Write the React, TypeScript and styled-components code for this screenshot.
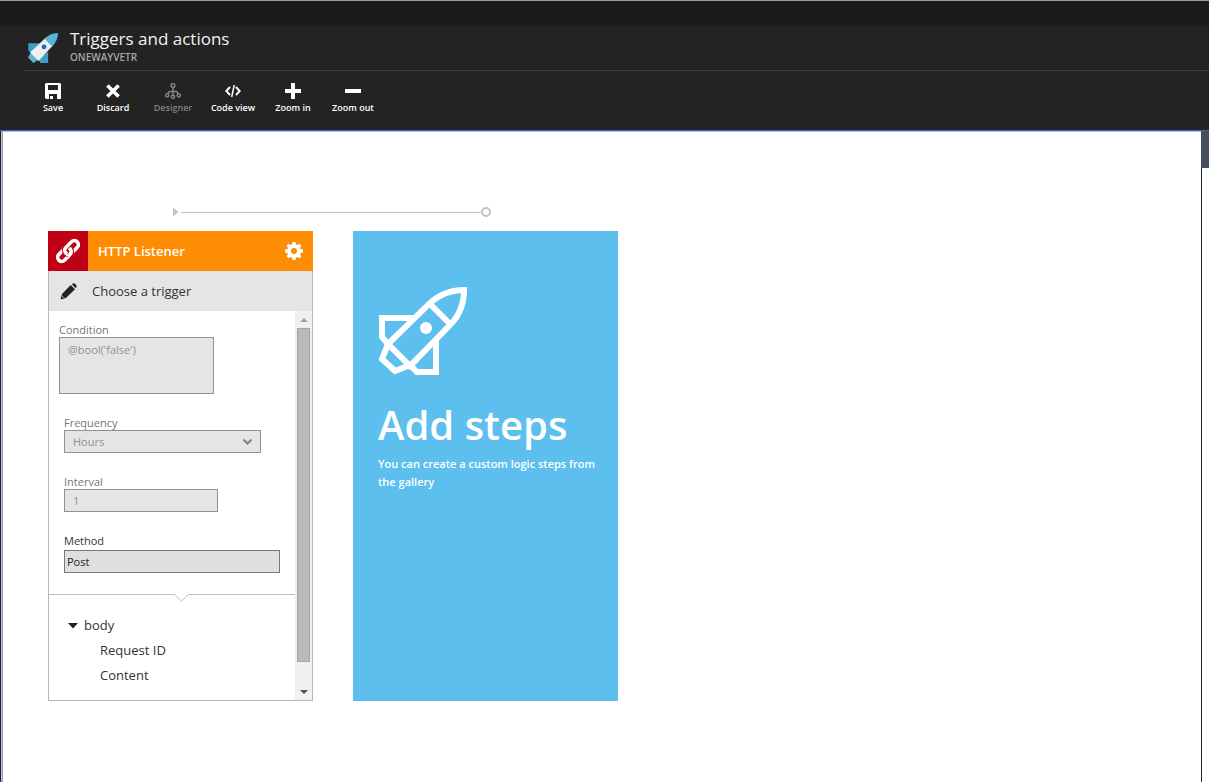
import React from 'react';
import styled, { createGlobalStyle } from 'styled-components';

const GlobalStyle = createGlobalStyle`
  * { box-sizing: border-box; }
  body { margin: 0; background: #fff; font-family: "Open Sans", "Noto Sans", sans-serif; }
  h1, h2, p, ul { margin: 0; padding: 0; }
  button, input, textarea, select { font-family: inherit; border-radius: 0; margin: 0; }
`;

const Page = styled.div`
  display: flex;
  flex-direction: column;
  min-height: 100vh;
`;

const TopStrip = styled.div`
  height: 26px;
  background: #1b1b1b;
  border-top: 1px solid #9a9d9c;
`;

const Header = styled.header`
  background: #232323;
  border-bottom: 1px solid #3a62b5;
  padding-left: 23px;
`;

const TitleBar = styled.div`
  display: flex;
  align-items: center;
  gap: 12px;
  height: 45px;
  padding-left: 5px;
  border-bottom: 1px solid #3e3e3e;
`;

const TitleText = styled.div`
  padding-bottom: 4px;
`;

const Title = styled.h1`
  color: #f2f2f2;
  font-size: 17px;
  line-height: 22px;
  font-weight: 400;
`;

const Subtitle = styled.p`
  color: #a6a6a6;
  font-size: 10px;
  line-height: 14px;
  font-weight: 600;
`;

const Toolbar = styled.nav`
  display: flex;
  height: 59px;
  padding-top: 12px;
`;

const ToolButton = styled.button`
  display: flex;
  flex-direction: column;
  align-items: center;
  gap: 3px;
  width: 60px;
  padding: 0;
  border: 0;
  background: none;
  color: #fff;
  font-size: 9px;
  line-height: 12px;
  font-weight: 600;
  white-space: nowrap;
  &:disabled { color: #828282; }
`;

const Workspace = styled.div`
  display: flex;
  flex: 1;
`;

const LeftEdge = styled.div`
  width: 3px;
  background: #a9c0f3;
  border-left: 1px solid #232323;
  border-right: 1px solid #a8a29c;
`;

const Canvas = styled.main`
  flex: 1;
  padding: 75px 45px;
  border-top: 1px solid #a9c0f3;
`;

const RightEdge = styled.div`
  width: 8px;
  border-left: 1px solid #232323;
`;

const EdgeThumb = styled.div`
  height: 37px;
  margin-left: -1px;
  background: #474e5d;
`;

const Connector = styled.div`
  display: flex;
  align-items: center;
  width: 318px;
  height: 10px;
  margin: 0 0 14px 125px;
`;

const ConnectorLine = styled.div`
  flex: 1;
  height: 1px;
  margin-left: 2px;
  background: #bfc4cc;
`;

const ConnectorEnd = styled.div`
  width: 10px;
  height: 10px;
  border: 2px solid #bfc4cc;
  border-radius: 50%;
`;

const Cards = styled.div`
  display: flex;
  gap: 40px;
`;

const Card = styled.section`
  display: flex;
  flex-direction: column;
  width: 265px;
  height: 470px;
`;

const CardHeader = styled.header`
  display: flex;
  align-items: center;
  height: 40px;
  background: #ff8c05;
`;

const ServiceIcon = styled.div`
  display: flex;
  align-items: center;
  justify-content: center;
  width: 40px;
  height: 40px;
  background: #c00014;
`;

const CardTitle = styled.h2`
  flex: 1;
  padding-left: 10px;
  color: #fff;
  font-size: 13px;
  line-height: 20px;
  font-weight: 600;
`;

const IconButton = styled.button`
  display: flex;
  padding: 0;
  margin-right: 10px;
  border: 0;
  background: none;
`;

const CardFrame = styled.div`
  display: flex;
  flex-direction: column;
  flex: 1;
  border: 1px solid #b7b7b7;
  border-top: 0;
`;

const TriggerButton = styled.button`
  display: flex;
  align-items: center;
  gap: 15px;
  height: 40px;
  padding: 0 0 0 11px;
  border: 0;
  background: #e5e5e5;
  color: #333;
  font-size: 13px;
  line-height: 20px;
`;

const CardBody = styled.div`
  display: flex;
  flex: 1;
`;

const CardContent = styled.div`
  flex: 1;
  padding-top: 12px;
`;

const Field = styled.div<{ $indent?: number }>`
  display: flex;
  flex-direction: column;
  align-items: flex-start;
  margin: 0 0 22px ${(p) => p.$indent ?? 15}px;
`;

const Label = styled.label<{ $active?: boolean }>`
  color: ${(p) => (p.$active ? '#333' : '#767676')};
  font-size: 11px;
  line-height: 14px;
  padding-bottom: ${(p) => (p.$active ? 2 : 0)}px;
`;

const ConditionBox = styled.textarea`
  display: block;
  width: 155px;
  height: 57px;
  padding: 4px 8px;
  border: 1px solid #929292;
  background: #e5e5e5;
  color: #929292;
  font-size: 11px;
  line-height: 16px;
  resize: none;
`;

const TextBox = styled.input<{ $width: number }>`
  width: ${(p) => p.$width}px;
  height: 23px;
  padding: 0 8px;
  border: 1px solid #929292;
  background: #e5e5e5;
  color: #929292;
  font-size: 11px;
  &:enabled { padding: 0 2px; background: #dfdfdf; border-color: #777; color: #222; }
`;

const SelectWrap = styled.div`
  position: relative;
  width: 197px;
  height: 23px;
`;

const Select = styled.select`
  display: block;
  appearance: none;
  width: 100%;
  height: 23px;
  padding: 0 8px;
  border: 1px solid #929292;
  background: #e5e5e5;
  color: #929292;
  font-size: 11px;
  opacity: 1;
`;

const SelectArrow = styled.svg`
  position: absolute;
  right: 8px;
  top: 8px;
  pointer-events: none;
`;

const Divider = styled.svg`
  display: block;
  width: 100%;
  height: 8px;
  margin-top: -1px;
`;

const Tree = styled.ul`
  list-style: none;
  padding: 11px 0 0 19px;
  color: #333;
  font-size: 13px;
  line-height: 25px;
  ul { padding-left: 32px; list-style: none; }
`;

const TreeToggle = styled.button`
  display: flex;
  align-items: center;
  gap: 6px;
  padding: 0;
  border: 0;
  background: none;
  color: inherit;
  font-size: 13px;
  line-height: 25px;
`;

const Scrollbar = styled.div`
  display: flex;
  flex-direction: column;
  align-items: center;
  width: 17px;
  background: #f0f0f0;
`;

const ScrollArrow = styled.div`
  display: flex;
  align-items: center;
  justify-content: center;
  height: 17px;
`;

const ScrollTrack = styled.div`
  flex: 1;
  padding-bottom: 21px;
`;

const ScrollThumb = styled.div`
  width: 13px;
  height: 100%;
  background: #bababa;
  border: 1px solid #a6a6a6;
`;

const AddCard = styled(Card)`
  padding: 56px 20px 0 25px;
  background: #5cbfed;
  color: #fff;
`;

const AddTitle = styled.h2`
  margin-top: 20px;
  font-size: 40px;
  line-height: 60px;
  font-weight: 600;
`;

const AddText = styled.p`
  font-size: 11px;
  line-height: 18px;
  font-weight: 600;
`;

const ColorRocket = () => (
  <svg width="30" height="30" viewBox="0 0 88 88" aria-hidden="true">
    <path d="M1 30H36L9 58L1 51Z" fill="#3f9fcb" />
    <path d="M59 54V88H36L31 78Z" fill="#3f9fcb" />
    <path d="M9 56L0 72L16 88L31 78Z" fill="#59b4d9" />
    <path d="M51 15L6 57L31 82L73 37Z" fill="#efefef" />
    <path d="M88 0Q63 1 48 17L71 40Q88 22 88 0Z" fill="#59b4d9" />
    <circle cx="47" cy="41" r="7" fill="#1072c6" />
  </svg>
);

const OutlineRocket = () => (
  <svg width="89" height="88" viewBox="-1 0 89 88" fill="none" stroke="#fff" strokeWidth="6" aria-hidden="true">
    <path d="M85 3Q64 3 49 18L9 57L31 79L71 38Q85 24 85 3Z" />
    <path d="M51 17L72 38" />
    <path d="M35 31H3V50L9 57L3 72L16 84L31 78L38 85H57V54" />
    <circle cx="47" cy="41" r="6" fill="#fff" stroke="none" />
  </svg>
);

const LinkIcon = () => (
  <svg width="26" height="26" viewBox="-13 -13 26 26" fill="none" aria-hidden="true">
    <g transform="rotate(-45)">
      <rect x="-13" y="-4" width="16" height="8" rx="4" stroke="#fff" strokeWidth="3.6" />
      <rect x="-3" y="-4" width="16" height="8" rx="4" stroke="#c00014" strokeWidth="5.4" />
      <rect x="-3" y="-4" width="16" height="8" rx="4" stroke="#fff" strokeWidth="3.6" />
      <path d="M-2.5 4H-0.5Q3 3.5 3 0" stroke="#c00014" strokeWidth="5.4" />
      <path d="M-4 4H-1.5Q3 3.5 3 -0.5" stroke="#fff" strokeWidth="3.6" />
    </g>
  </svg>
);

const SaveIcon = () => (
  <svg width="16" height="16" viewBox="0 0 16 16" aria-hidden="true">
    <path fill="currentColor" fillRule="evenodd" d="M1 0H15L16 1V16H12V11H4V16H1L0 15V1ZM3 2V7H13V2ZM5 13H8V16H5Z" />
  </svg>
);

const DiscardIcon = () => (
  <svg width="16" height="16" viewBox="0 0 16 16" stroke="currentColor" strokeWidth="3.6" aria-hidden="true">
    <path d="M2.4 2.4L13.6 13.6M13.6 2.4L2.4 13.6" />
  </svg>
);

const DesignerIcon = () => (
  <svg width="16" height="16" viewBox="0 0 16 16" fill="none" stroke="currentColor" strokeWidth="1.5" aria-hidden="true">
    <circle cx="8" cy="2.5" r="1.9" />
    <circle cx="2.3" cy="12.3" r="1.6" />
    <circle cx="13.7" cy="12.3" r="1.6" />
    <circle cx="8" cy="13.8" r="1.6" />
    <path d="M8 4.4V12M3 10.8Q3.3 8.5 5.5 8.5H10.5Q12.7 8.5 13 10.8" />
  </svg>
);

const CodeIcon = () => (
  <svg width="16" height="16" viewBox="0 0 16 16" fill="none" stroke="currentColor" strokeWidth="1.9" aria-hidden="true">
    <path d="M5 4L1.3 8L5 12M11 4L14.7 8L11 12" />
    <path d="M9.3 2L6.7 14" strokeWidth="1.5" />
  </svg>
);

const PlusIcon = () => (
  <svg width="16" height="16" viewBox="0 0 16 16" fill="currentColor" aria-hidden="true">
    <path d="M6 0H10V6H16V10H10V16H6V10H0V6H6Z" />
  </svg>
);

const MinusIcon = () => (
  <svg width="16" height="16" viewBox="0 0 16 16" fill="currentColor" aria-hidden="true">
    <path d="M0 6H16V10H0Z" />
  </svg>
);

const GearIcon = () => (
  <svg width="18" height="18" viewBox="-9 -9 18 18" aria-hidden="true">
    <g fill="#fff">
      {[0, 45, 90, 135].map((a) => (
        <path key={a} d="M-2.2 -6L-1.4 -9H1.4L2.2 -6V6L1.4 9H-1.4L-2.2 6Z" transform={`rotate(${a})`} />
      ))}
      <circle r="6.8" />
    </g>
    <circle r="3" fill="#ff8c05" />
  </svg>
);

const PencilIcon = () => (
  <svg width="17" height="17" viewBox="0 0 17 17" fill="#222" aria-hidden="true">
    <path d="M10.7 2L15 6.3L5.9 14.9L0.5 16.5L2 10.9Z" />
    <path d="M11.8 1.3L13.2 0.4Q14 0 14.8 0.6L16.5 2.4Q17 3.2 16.4 4L15.7 5.3Z" />
    <path d="M1.6 12.4L4.6 15.4" stroke="#e5e5e5" strokeWidth="0.7" />
  </svg>
);

const tools = [
  { label: 'Save', Icon: SaveIcon },
  { label: 'Discard', Icon: DiscardIcon },
  { label: 'Designer', Icon: DesignerIcon, disabled: true },
  { label: 'Code view', Icon: CodeIcon },
  { label: 'Zoom in', Icon: PlusIcon },
  { label: 'Zoom out', Icon: MinusIcon },
];

export default function App() {
  return (
    <Page>
      <GlobalStyle />
      <TopStrip />
      <Header>
        <TitleBar>
          <ColorRocket />
          <TitleText>
            <Title>Triggers and actions</Title>
            <Subtitle>ONEWAYVETR</Subtitle>
          </TitleText>
        </TitleBar>
        <Toolbar>
          {tools.map(({ label, Icon, disabled }) => (
            <ToolButton key={label} type="button" disabled={disabled}>
              <Icon />
              {label}
            </ToolButton>
          ))}
        </Toolbar>
      </Header>
      <Workspace>
        <LeftEdge />
        <Canvas>
          <Connector>
            <svg width="6" height="10" viewBox="0 0 6 10" aria-hidden="true">
              <path d="M0 0.5L5.5 5L0 9.5Z" fill="#bfc4cc" />
            </svg>
            <ConnectorLine />
            <ConnectorEnd />
          </Connector>
          <Cards>
            <Card>
              <CardHeader>
                <ServiceIcon>
                  <LinkIcon />
                </ServiceIcon>
                <CardTitle>HTTP Listener</CardTitle>
                <IconButton type="button" aria-label="Settings">
                  <GearIcon />
                </IconButton>
              </CardHeader>
              <CardFrame>
                <TriggerButton type="button">
                  <PencilIcon />
                  Choose a trigger
                </TriggerButton>
                <CardBody>
                  <CardContent>
                    <Field $indent={10}>
                      <Label htmlFor="condition">Condition</Label>
                      <ConditionBox id="condition" disabled defaultValue="@bool('false')" />
                    </Field>
                    <Field>
                      <Label htmlFor="frequency">Frequency</Label>
                      <SelectWrap>
                        <Select id="frequency" disabled defaultValue="Hours">
                          <option>Hours</option>
                        </Select>
                        <SelectArrow width="11" height="8" viewBox="0 0 11 8" fill="none" stroke="#808080" strokeWidth="2">
                          <path d="M1.5 1.5L5.5 5.5L9.5 1.5" />
                        </SelectArrow>
                      </SelectWrap>
                    </Field>
                    <Field>
                      <Label htmlFor="interval">Interval</Label>
                      <TextBox id="interval" $width={154} disabled defaultValue="1" />
                    </Field>
                    <Field>
                      <Label htmlFor="method" $active>Method</Label>
                      <TextBox id="method" $width={216} defaultValue="Post" />
                    </Field>
                    <Divider viewBox="0 0 246 8" fill="none" stroke="#bdbdbd" aria-hidden="true">
                      <path d="M0 0.5H125.5L132.5 7.2L139.5 0.5H246" />
                    </Divider>
                    <Tree>
                      <li>
                        <TreeToggle type="button" aria-expanded="true">
                          <svg width="10" height="6" viewBox="0 0 10 6" aria-hidden="true">
                            <path d="M0 0H10L5 5.5Z" fill="#222" />
                          </svg>
                          body
                        </TreeToggle>
                        <ul>
                          <li>Request ID</li>
                          <li>Content</li>
                        </ul>
                      </li>
                    </Tree>
                  </CardContent>
                  <Scrollbar aria-hidden="true">
                    <ScrollArrow>
                      <svg width="8" height="4" viewBox="0 0 8 4"><path d="M0 4H8L4 0Z" fill="#a0a0a0" /></svg>
                    </ScrollArrow>
                    <ScrollTrack>
                      <ScrollThumb />
                    </ScrollTrack>
                    <ScrollArrow>
                      <svg width="8" height="4" viewBox="0 0 8 4"><path d="M0 0H8L4 4Z" fill="#505050" /></svg>
                    </ScrollArrow>
                  </Scrollbar>
                </CardBody>
              </CardFrame>
            </Card>
            <AddCard>
              <OutlineRocket />
              <AddTitle>Add steps</AddTitle>
              <AddText>You can create a custom logic steps from the gallery</AddText>
            </AddCard>
          </Cards>
        </Canvas>
        <RightEdge>
          <EdgeThumb />
        </RightEdge>
      </Workspace>
    </Page>
  );
}
